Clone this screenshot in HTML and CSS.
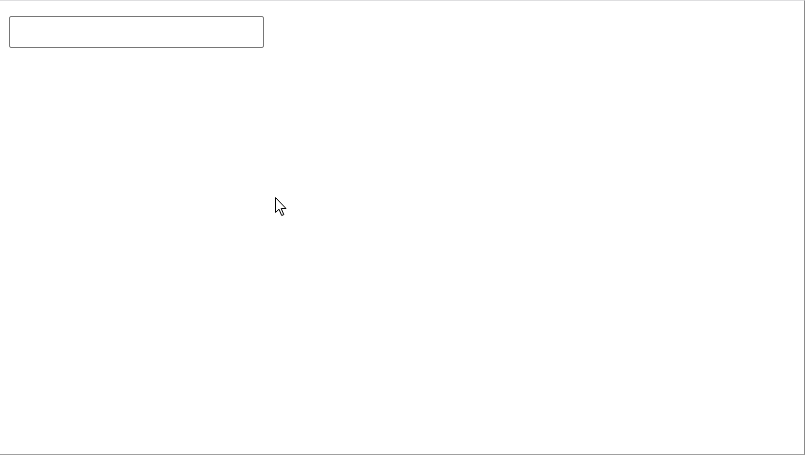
FILE: index.html
```html
<!DOCTYPE html>
<html lang="en">
<head>
  <meta charset="UTF-8" />
  <meta name="viewport" content="width=device-width, initial-scale=1" />
  <title>Input</title>
  <link rel="stylesheet" href="styles.css">
</head>
<body>
  <div class="page">
    <input type="text" class="field" />
    <!-- puntero del raton sobre la pagina -->
    <svg class="cursor" width="13" height="20" viewBox="0 0 13 20">
      <path d="M0.5 0.5 L0.5 15.5 L4 12.2 L6.7 18.5 L8.8 17.6 L6.2 11.5 L11 11.5 Z" fill="#fff" stroke="#000" stroke-width="1" stroke-linejoin="miter" />
    </svg>
  </div>
</body>
</html>
```

FILE: styles.css
```css
html, body {
  margin: 0;
  padding: 0;
  background-color: #fff;
}
.page {
  position: relative;
  width: 805px;
  height: 455px;
  box-sizing: border-box;
  border-top: 1px solid #dedee0;
  border-right: 1px solid #8a8a8a;
  border-bottom: 1px solid #a0a0a0;
  padding: 15px 0 0 9px;
}
input.field {
  display: block;
  width: 255px;
  height: 32px;
  box-sizing: border-box;
  margin: 0;
  border: 1px solid #767676;
  border-radius: 2px;
  background-color: #fff;
  font-family: 'Liberation Sans', sans-serif;
  font-size: 14px;
}
.cursor {
  position: absolute;
  left: 275px;
  top: 196px;
}
```
